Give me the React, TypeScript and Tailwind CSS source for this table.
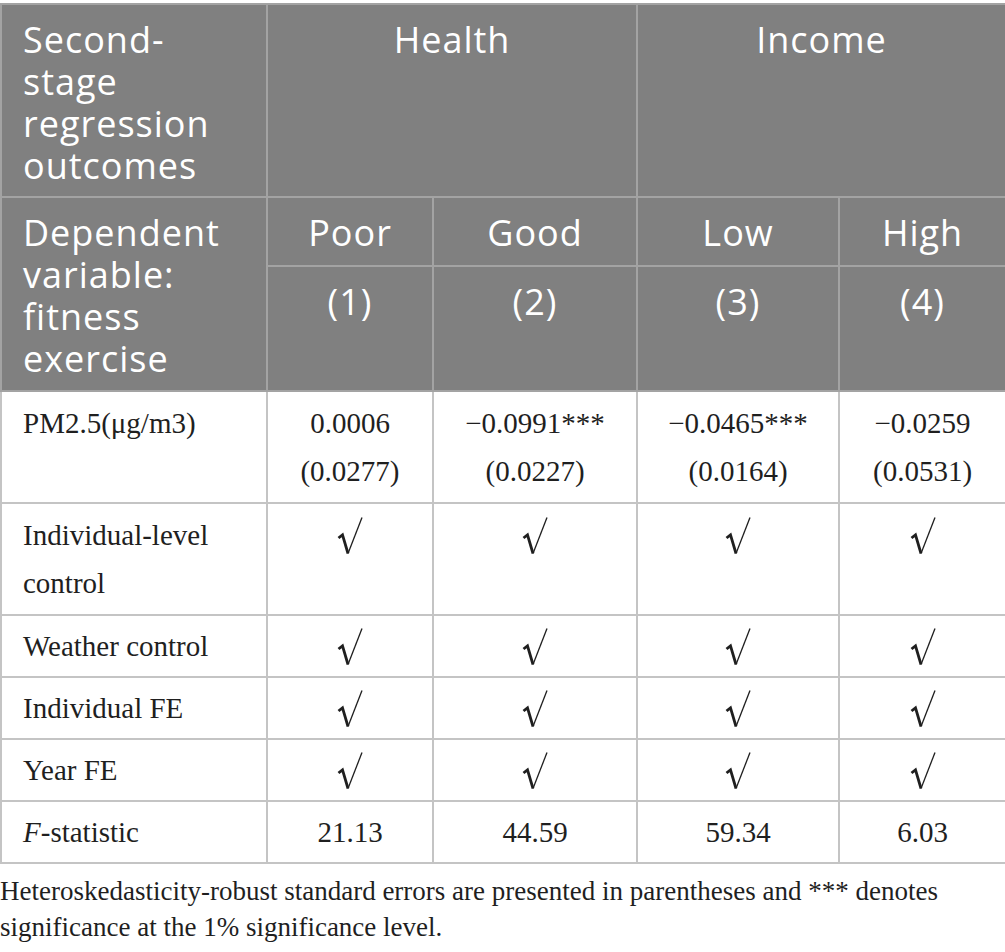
const check = (
  <svg viewBox="0 0 26 40" className="mt-[5px] inline-block h-[40px] w-[26px] align-top">
    <path d="M1.5 22 L5.5 18.8 L11 37.5" fill="none" stroke="#1f1f1f" strokeWidth="2.8" strokeLinejoin="miter" />
    <path d="M11 37.5 L25 1.5" fill="none" stroke="#1f1f1f" strokeWidth="1.3" />
  </svg>
)

const rows: { label: React.ReactNode; cells: React.ReactNode[][]; two?: boolean }[] = [
  {
    label: "PM2.5(μg/m3)",
    cells: [
      ["0.0006", "(0.0277)"],
      ["−0.0991***", "(0.0227)"],
      ["−0.0465***", "(0.0164)"],
      ["−0.0259", "(0.0531)"],
    ],
    two: true,
  },
  { label: "Individual-level control", cells: [[check], [check], [check], [check]], two: true },
  { label: "Weather control", cells: [[check], [check], [check], [check]] },
  { label: "Individual FE", cells: [[check], [check], [check], [check]] },
  { label: "Year FE", cells: [[check], [check], [check], [check]] },
  {
    label: (
      <>
        <i>F</i>-statistic
      </>
    ),
    cells: [["21.13"], ["44.59"], ["59.34"], ["6.03"]],
  },
]

export default function App() {
  return (
    <div className="w-[1005px] bg-white pt-[3px]">
      <table className="w-[1005px] table-fixed border-collapse border-2 border-[#c4c4c4]">
        <colgroup>
          <col className="w-[266px]" />
          <col className="w-[166px]" />
          <col className="w-[204px]" />
          <col className="w-[202px]" />
          <col className="w-[167px]" />
        </colgroup>
        <thead className="bg-[#808080] font-['Open_Sans',sans-serif] text-[36px] font-normal leading-[42px] tracking-[1px] text-white">
          <tr>
            <th className="h-[193px] border-2 border-[#a3a3a3] pb-[9px] pl-[21px] pr-[12px] pt-[14px] text-left align-top font-normal">
              Second-stage regression outcomes
            </th>
            <th colSpan={2} className="border-2 border-[#a3a3a3] pt-[14px] align-top font-normal">
              Health
            </th>
            <th colSpan={2} className="border-2 border-[#a3a3a3] pt-[14px] align-top font-normal">
              Income
            </th>
          </tr>
          <tr>
            <th
              rowSpan={2}
              className="border-2 border-[#a3a3a3] pb-[10px] pl-[21px] pr-[12px] pt-[14px] text-left align-top font-normal"
            >
              Dependent variable: fitness exercise
            </th>
            {["Poor", "Good", "Low", "High"].map((h) => (
              <th key={h} className="h-[69px] border-2 border-[#a3a3a3] pb-[11px] pt-[14px] align-top font-normal">
                {h}
              </th>
            ))}
          </tr>
          <tr>
            {["(1)", "(2)", "(3)", "(4)"].map((h) => (
              <th key={h} className="h-[125px] border-2 border-[#a3a3a3] pt-[14px] align-top font-normal">
                {h}
              </th>
            ))}
          </tr>
        </thead>
        <tbody className="font-['Liberation_Serif',serif] text-[29px] leading-[48px] text-[#1f1f1f]">
          {rows.map((r, i) => (
            <tr key={i}>
              <td
                className={`border-2 border-[#c4c4c4] pl-[21px] pr-[8px] align-top ${
                  r.two ? "py-[7px]" : "py-[6px]"
                }`}
              >
                {r.label}
              </td>
              {r.cells.map((c, j) => (
                <td
                  key={j}
                  className={`border-2 border-[#c4c4c4] text-center align-top ${r.two ? "py-[7px]" : "py-[6px]"}`}
                >
                  {c.map((line, k) => (
                    <div key={k} className="h-[48px]">
                      {line}
                    </div>
                  ))}
                </td>
              ))}
            </tr>
          ))}
        </tbody>
      </table>
      <p className="mt-[9px] font-['Liberation_Serif',serif] text-[27px] leading-[36px] text-[#1f1f1f]">
        Heteroskedasticity-robust standard errors are presented in parentheses and *** denotes significance at the 1%
        significance level.
      </p>
    </div>
  )
}
